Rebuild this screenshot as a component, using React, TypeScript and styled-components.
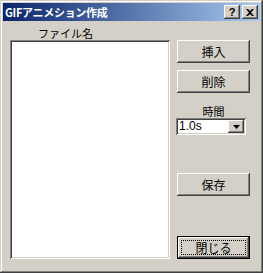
import styled, { createGlobalStyle } from "styled-components";

const GlobalStyle = createGlobalStyle`
  html, body {
    margin: 0;
    padding: 0;
    background: #d4d0c8;
  }
  body {
    font-family: "Noto Sans CJK JP", "DejaVu Sans", sans-serif;
  }
`;

const font = `"Noto Sans CJK JP", "Liberation Sans", sans-serif`;

const Window = styled.div`
  box-sizing: border-box;
  width: 263px;
  height: 273px;
  background: #d4d0c8;
  padding: 3px;
  display: flex;
  flex-direction: column;
  box-shadow: inset -1px -1px 0 #404040, inset 1px 1px 0 #d4d0c8,
    inset -2px -2px 0 #808080, inset 2px 2px 0 #ffffff;
`;

const TitleBar = styled.div`
  height: 18px;
  display: flex;
  align-items: center;
  padding: 0 2px 0 2px;
  background: linear-gradient(to right, #0a246a, #a6caf0);
  gap: 2px;
`;

const Title = styled.div`
  flex: 1;
  color: #fff;
  font-family: ${font};
  font-weight: bold;
  font-size: 11px;
  line-height: 18px;
  letter-spacing: -0.3px;
`;

const CaptionButton = styled.div`
  box-sizing: border-box;
  width: 16px;
  height: 14px;
  background: #d4d0c8;
  display: flex;
  align-items: center;
  justify-content: center;
  font-family: "Liberation Sans", sans-serif;
  font-weight: bold;
  font-size: 11px;
  color: #000;
  box-shadow: inset -1px -1px 0 #404040, inset 1px 1px 0 #ffffff,
    inset -2px -2px 0 #808080;
`;

const Content = styled.div`
  flex: 1;
  display: flex;
  gap: 7px;
  padding: 6px 10px 12px 7px;
`;

const LeftColumn = styled.div`
  width: 160px;
  display: flex;
  flex-direction: column;
`;

const Label = styled.div<{ $indent?: number }>`
  font-family: ${font};
  font-size: 11px;
  line-height: 13px;
  height: 13px;
  color: #000;
  padding-left: ${(p) => p.$indent ?? 0}px;
`;

const ListBox = styled.div`
  flex: 1;
  background: #fff;
  box-shadow: inset 1px 1px 0 #808080, inset -1px -1px 0 #ffffff,
    inset 2px 2px 0 #404040, inset -2px -2px 0 #d4d0c8;
`;

const RightColumn = styled.div`
  width: 73px;
  display: flex;
  flex-direction: column;
  padding-top: 13px;
`;

const Button = styled.div<{ $top: number }>`
  box-sizing: border-box;
  height: 23px;
  margin-top: ${(p) => p.$top}px;
  background: #d4d0c8;
  display: flex;
  align-items: center;
  justify-content: center;
  font-family: ${font};
  font-size: 12px;
  color: #000;
  box-shadow: inset -1px -1px 0 #404040, inset 1px 1px 0 #ffffff,
    inset -2px -2px 0 #808080;
`;

const DefaultButton = styled(Button)`
  border: 1px solid #000;
  padding: 3px;
`;

const Focus = styled.div`
  box-sizing: border-box;
  width: 100%;
  height: 100%;
  border: 1px dotted #000;
  display: flex;
  align-items: center;
  justify-content: center;
`;

const TimeLabel = styled(Label)`
  text-align: center;
  margin-top: 12px;
`;

const Combo = styled.div`
  box-sizing: border-box;
  height: 17px;
  margin-right: 4px;
  margin-left: -1px;
  background: #fff;
  display: flex;
  align-items: stretch;
  padding: 2px;
  box-shadow: inset 1px 1px 0 #808080, inset -1px -1px 0 #ffffff,
    inset 2px 2px 0 #404040, inset -2px -2px 0 #d4d0c8;
`;

const ComboText = styled.div`
  flex: 1;
  font-family: "Liberation Sans", sans-serif;
  font-size: 12px;
  line-height: 13px;
  padding-left: 1px;
  color: #000;
`;

const ComboArrow = styled.div`
  box-sizing: border-box;
  width: 16px;
  background: #d4d0c8;
  display: flex;
  align-items: center;
  justify-content: center;
  box-shadow: inset -1px -1px 0 #404040, inset 1px 1px 0 #ffffff,
    inset -2px -2px 0 #808080;
`;

export default function App() {
  return (
    <>
      <GlobalStyle />
      <Window>
        <TitleBar>
          <Title>GIFアニメション作成</Title>
          <CaptionButton>?</CaptionButton>
          <CaptionButton>
            <svg width="8" height="7" viewBox="0 0 8 7">
              <path d="M0 0h2l2 2 2-2h2L5 3.5 8 7H6L4 5 2 7H0l3-3.5z" fill="#000" />
            </svg>
          </CaptionButton>
        </TitleBar>
        <Content>
          <LeftColumn>
            <Label $indent={28}>ファイル名</Label>
            <ListBox />
          </LeftColumn>
          <RightColumn>
            <Button $top={0}>挿入</Button>
            <Button $top={7}>削除</Button>
            <TimeLabel>時間</TimeLabel>
            <Combo>
              <ComboText>1.0s</ComboText>
              <ComboArrow>
                <svg width="7" height="4" viewBox="0 0 7 4">
                  <path d="M0 0h7L3.5 4z" fill="#000" />
                </svg>
              </ComboArrow>
            </Combo>
            <Button $top={38}>保存</Button>
            <DefaultButton $top={40}>
              <Focus>閉じる</Focus>
            </DefaultButton>
          </RightColumn>
        </Content>
      </Window>
    </>
  );
}
